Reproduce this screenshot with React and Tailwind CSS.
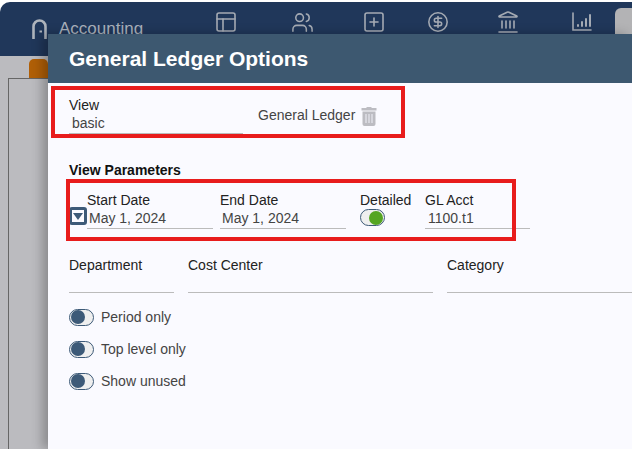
import { PanelsTopLeft, Users, SquarePlus, CircleDollarSign, Landmark } from "lucide-react";

function Field({ label, value, className, valueClass = "h-[21px] pl-[3px]" }) {
  return (
    <div className={className}>
      <div className="text-[14px] leading-[16px] text-[#222]">{label}</div>
      <div className={`border-b border-[#bbb] text-[14px] leading-[20px] text-[#444] ${valueClass}`}>
        {value}
      </div>
    </div>
  );
}

function Toggle({ label }) {
  return (
    <div className="flex items-center gap-[7px] h-[18px]">
      <div className="w-[25px] h-[17px] rounded-full border border-[#3d5a78] bg-[#efefef] pl-[1px] flex items-center">
        <div className="w-[14px] h-[14px] rounded-full bg-[#3d5a78]" />
      </div>
      <span className="text-[14px] text-[#444]">{label}</span>
    </div>
  );
}

function ChartIcon() {
  return (
    <svg width="20" height="20" viewBox="0 0 20 20" fill="none" stroke="currentColor" strokeWidth="1.6" strokeLinecap="round">
      <path d="M1 1v17h18" />
      <path d="M6 14v-1M10 14v-4M14 14V7M18 14V3" strokeWidth="2" />
    </svg>
  );
}

function TrashIcon() {
  return (
    <svg width="16" height="20" viewBox="0 0 16 20" className="shrink-0">
      <path d="M5.5 2V1h5v1H15.5v2.5H.5V2z" fill="#bcbcc2" />
      <path d="M1.5 5.5h13V18a2 2 0 0 1-2 2h-9a2 2 0 0 1-2-2z" fill="#bcbcc2" />
      <path d="M5 8v9M8 8v9M11 8v9" stroke="#e8e8ee" strokeWidth="1.2" />
    </svg>
  );
}

export default function App() {
  return (
    <div className="relative w-[632px] h-[449px] overflow-hidden bg-white font-['Liberation_Sans',Arial,sans-serif]">
      <div className="pt-[2px]">
        <div className="h-[54px] rounded-tl-[10px] bg-[#20375a] flex items-start relative">
          <div className="flex items-start pl-[32px] pt-[17px] gap-[12px]">
            <svg width="15" height="20" viewBox="0 0 15 20" fill="none" stroke="#aeb4bc" strokeWidth="2.6">
              <path d="M1.5 20V7.5a6 6 0 0 1 12 0V20" />
              <path d="M7.5 12.5h2.5" strokeWidth="2" />
            </svg>
            <span className="text-[17px] leading-[20px] text-[#a9b0ba]">Accounting</span>
          </div>
          <div className="absolute left-[214px] top-[8px] flex items-center text-[#a5abb4]">
            <PanelsTopLeft size={24} strokeWidth={1.6} />
            <Users size={23} strokeWidth={1.6} className="ml-[53px]" />
            <SquarePlus size={24} strokeWidth={1.6} className="ml-[48px]" />
            <CircleDollarSign size={22} strokeWidth={1.7} className="ml-[41px]" />
            <Landmark size={24} strokeWidth={1.6} className="ml-[47px]" />
            <div className="ml-[52px]">
              <ChartIcon />
            </div>
          </div>
          <div className="absolute left-[615px] top-[6px] w-[17px] h-[26px] rounded-tl-[6px] bg-[#b3b3b5]" />
        </div>
        <div className="h-[393px] bg-[#bbbbbf] pl-[8px] pt-[3px]">
          <div className="ml-[21px] w-[19px] h-[19px] rounded-t-[5px] bg-[#b05f07]" />
          <div className="w-[40px] h-[371px] border-l border-t border-[#666]" />
        </div>
      </div>

      {/* modal */}
      <div className="absolute left-[48px] top-[34px] w-[584px] h-[415px] bg-[#fafaff] shadow-[-6px_0_10px_rgba(0,0,0,0.25)]">
        <div className="h-[49px] bg-[#3d5870] pl-[21px] flex items-center">
          <h1 className="text-[21px] font-bold text-white">General Ledger Options</h1>
        </div>

        <div className="pl-[21px]">
          <div className="flex items-start pt-[14px]">
            <Field label="View" value="basic" className="w-[174px]" />
            <div className="flex items-center ml-[15px] mt-[8px] gap-[6px]">
              <span className="text-[14px] text-[#444]">General Ledger</span>
              <TrashIcon />
            </div>
          </div>

          <div className="mt-[28px] text-[14px] font-bold leading-[16px] text-[#111]">View Parameters</div>

          <div className="flex mt-[14px] relative">
            <div className="w-[18px] flex items-start pt-[15px]">
              <div className="w-[18px] h-[18px] rounded-[3px] border-[3px] border-[#3d5a78] flex items-center justify-center shrink-0">
                <div className="w-0 h-0 border-x-[5px] border-x-transparent border-t-[7px] border-t-[#3d5a78]" />
              </div>
            </div>
            <Field label="Start Date" value="May 1, 2024" className="w-[126px]" valueClass="h-[21px] pl-[2px]" />
            <Field label="End Date" value="May 1, 2024" className="w-[126px] ml-[7px]" valueClass="h-[21px] pl-[2px]" />
            <div className="w-[65px] ml-[14px]">
              <div className="text-[14px] leading-[16px] text-[#222]">Detailed</div>
              <div className="mt-[1px] w-[25px] h-[17px] rounded-full border border-[#3d5a78] bg-[#efefef] pr-[1px] flex items-center justify-end">
                <div className="w-[14px] h-[14px] rounded-full bg-[#55a522]" />
              </div>
            </div>
            <Field label="GL Acct" value="1100.t1" className="w-[105px]" />
          </div>

          <div className="flex mt-[28px]">
            <Field label="Department" value="" className="w-[105px]" valueClass="h-[20px]" />
            <Field label="Cost Center" value="" className="w-[245px] ml-[14px]" valueClass="h-[20px]" />
            <Field label="Category" value="" className="w-[185px] ml-[14px]" valueClass="h-[20px]" />
          </div>

          <div className="flex flex-col gap-[14px] mt-[15px]">
            <Toggle label="Period only" />
            <Toggle label="Top level only" />
            <Toggle label="Show unused" />
          </div>
        </div>
      </div>

      {/* red annotation boxes */}
      <div className="absolute left-[51px] top-[86px] w-[354px] h-[52px] border-4 border-[#e81c1c]" />
      <div className="absolute left-[66px] top-[179px] w-[450px] h-[62px] border-4 border-[#e81c1c]" />
    </div>
  );
}
